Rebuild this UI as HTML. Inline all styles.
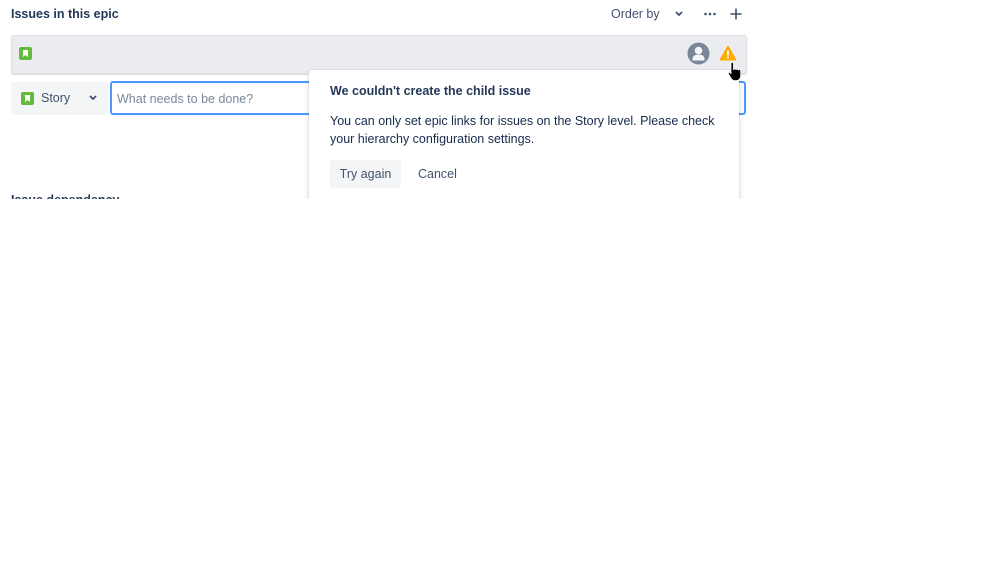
<!DOCTYPE html>
<html><head><meta charset="utf-8"><style>
*{box-sizing:border-box;margin:0;padding:0}
body{width:999px;height:562px;background:#fff;font-family:"Liberation Sans",sans-serif;color:#172b4d;position:relative;overflow:hidden}
.clip{position:absolute;left:0;top:0;width:999px;height:199px;overflow:hidden}
.abs{position:absolute}
.t{font-size:12.5px}
.b{font-weight:bold;color:#253858}
</style></head><body>
<div class="clip">
<div class="abs t b" style="left:11px;top:7px">Issues in this epic</div>
<div class="abs t" style="left:611px;top:7px;color:#42526e">Order by</div>
<svg class="abs" style="left:673px;top:9px" width="12" height="10"><path d="M3 3l3 3 3-3" stroke="#42526e" stroke-width="1.8" fill="none"/></svg>
<svg class="abs" style="left:703px;top:8px" width="14" height="12"><circle cx="2.5" cy="6" r="1.3" fill="#42526e"/><circle cx="7" cy="6" r="1.3" fill="#42526e"/><circle cx="11.5" cy="6" r="1.3" fill="#42526e"/></svg>
<svg class="abs" style="left:729px;top:7px" width="14" height="14"><path d="M7 1.5v11M1.5 7h11" stroke="#42526e" stroke-width="1.6"/></svg>

<div class="abs" style="left:11px;top:35px;width:736px;height:39px;background:#ebecf0;border:1px solid #dfe1e6;border-radius:3px;box-shadow:0 1px 1px rgba(9,30,66,.15)"></div>
<svg class="abs" style="left:19px;top:47px" width="13" height="13"><rect width="13" height="13" rx="2" fill="#63ba3c"/><path d="M4 3h5v7l-2.5-2-2.5 2z" fill="#fff"/></svg>
<svg class="abs" style="left:687px;top:42px" width="23" height="23"><circle cx="11.5" cy="11.5" r="11" fill="#7a869a"/><circle cx="11.5" cy="8.5" r="3.8" fill="#f4f5f7"/><path d="M5.5 17c0-3 2.5-4.5 6-4.5s6 1.5 6 4.5v1.5h-12z" fill="#f4f5f7"/></svg>
<svg class="abs" style="left:719px;top:45px" width="18" height="16"><path d="M9 1L17 15H1z" fill="#ffab00" stroke="#ffab00" stroke-linejoin="round"/><rect x="8.1" y="5.5" width="1.8" height="5" fill="#fff"/><rect x="8.1" y="11.5" width="1.8" height="1.8" fill="#fff"/></svg>

<div class="abs" style="left:11px;top:82px;width:97px;height:33px;background:#f4f5f7;border-radius:3px"></div>
<svg class="abs" style="left:21px;top:92px" width="13" height="13"><rect width="13" height="13" rx="2" fill="#63ba3c"/><path d="M4 3h5v7l-2.5-2-2.5 2z" fill="#fff"/></svg>
<div class="abs t" style="left:41px;top:91px;color:#42526e">Story</div>
<svg class="abs" style="left:87px;top:93px" width="12" height="10"><path d="M3 3l3 3 3-3" stroke="#42526e" stroke-width="1.8" fill="none"/></svg>
<div class="abs" style="left:110px;top:81px;width:636px;height:34px;border:2px solid #4c9aff;border-radius:3px;background:#fff"></div>
<div class="abs t" style="left:117px;top:92px;color:#7a869a">What needs to be done?</div>

<div class="abs t b" style="left:11px;top:193px">Issue dependency</div>

<div class="abs" style="left:309px;top:70px;width:430px;height:140px;background:#fff;border-radius:3px;box-shadow:0 4px 8px -2px rgba(9,30,66,.25),0 0 1px rgba(9,30,66,.31)"></div>
<div class="abs t b" style="left:330px;top:84px">We couldn't create the child issue</div>
<div class="abs t" style="left:330px;top:112px;color:#172b4d;line-height:18px;width:390px">You can only set epic links for issues on the Story level. Please check your hierarchy configuration settings.</div>
<div class="abs t" style="left:330px;top:160px;width:71px;height:28px;background:#f4f5f7;border-radius:3px;color:#42526e;text-align:center;line-height:28px">Try again</div>
<div class="abs t" style="left:418px;top:160px;color:#42526e;line-height:28px">Cancel</div>

<svg class="abs" style="left:727px;top:61px" width="16" height="22"><path d="M4 2.5c0-1.5 2.5-1.5 2.5 0V9c.3-1.5 2.5-1.5 2.5 0 .3-1.3 2.4-1.3 2.4.2.4-1 2.3-1 2.3.5v5c0 3-2 5-4.5 5H8c-2 0-3-1-4-2.5L1.5 13c-.8-1.4.8-2.5 1.8-1.3L4 13z" fill="#000" stroke="#fff" stroke-width=".8"/></svg>
</div>
</body></html>
